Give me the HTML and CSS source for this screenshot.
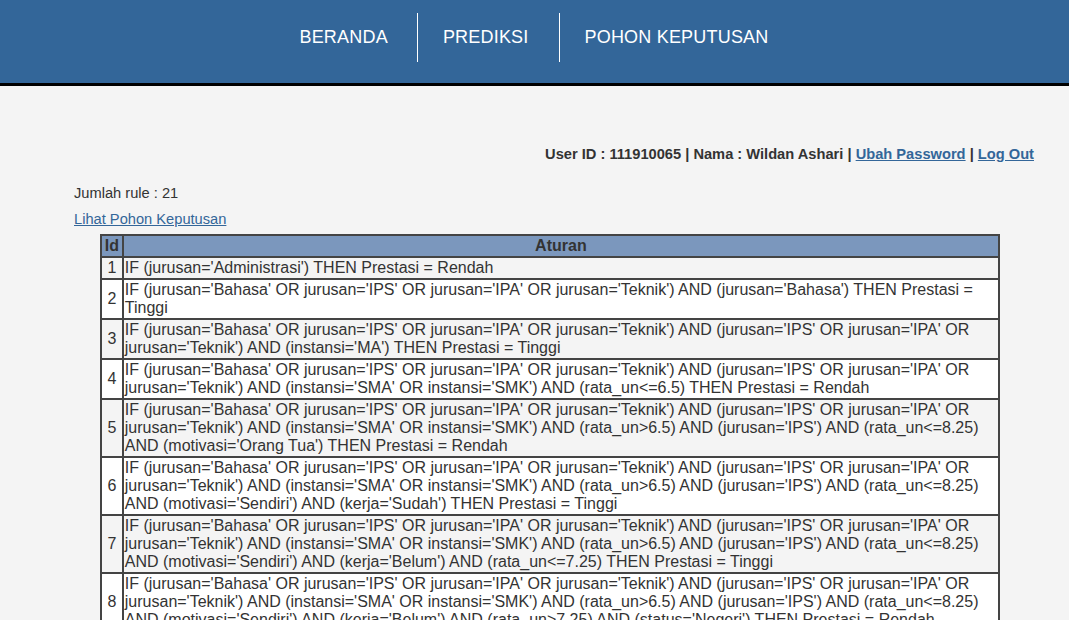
FILE: index.html
```html
<!DOCTYPE html>
<html>
<head>
<meta charset="utf-8">
<title>Pohon Keputusan</title>
<link rel="stylesheet" href="styles.css">
</head>
<body>
<header class="topbar">
  <nav class="nav">
    <a class="nav-item" href="#">BERANDA</a>
    <a class="nav-item" href="#">PREDIKSI</a>
    <a class="nav-item" href="#">POHON KEPUTUSAN</a>
  </nav>
</header>
<main class="content">
  <div class="userinfo">User ID : 111910065 | Nama : Wildan Ashari | <a href="#">Ubah Password</a> | <a href="#">Log Out</a></div>
  <p class="count">Jumlah rule : 21</p>
  <p class="treelink"><a href="#">Lihat Pohon Keputusan</a></p>
  <table class="rules">
    <thead>
      <tr><th class="id">Id</th><th>Aturan</th></tr>
    </thead>
    <tbody>
      <tr><td class="id">1</td><td>IF (jurusan='Administrasi') THEN Prestasi = Rendah</td></tr>
      <tr><td class="id">2</td><td>IF (jurusan='Bahasa' OR jurusan='IPS' OR jurusan='IPA' OR jurusan='Teknik') AND (jurusan='Bahasa') THEN Prestasi = Tinggi</td></tr>
      <tr><td class="id">3</td><td>IF (jurusan='Bahasa' OR jurusan='IPS' OR jurusan='IPA' OR jurusan='Teknik') AND (jurusan='IPS' OR jurusan='IPA' OR jurusan='Teknik') AND (instansi='MA') THEN Prestasi = Tinggi</td></tr>
      <tr><td class="id">4</td><td>IF (jurusan='Bahasa' OR jurusan='IPS' OR jurusan='IPA' OR jurusan='Teknik') AND (jurusan='IPS' OR jurusan='IPA' OR jurusan='Teknik') AND (instansi='SMA' OR instansi='SMK') AND (rata_un&lt;=6.5) THEN Prestasi = Rendah</td></tr>
      <tr><td class="id">5</td><td>IF (jurusan='Bahasa' OR jurusan='IPS' OR jurusan='IPA' OR jurusan='Teknik') AND (jurusan='IPS' OR jurusan='IPA' OR jurusan='Teknik') AND (instansi='SMA' OR instansi='SMK') AND (rata_un&gt;6.5) AND (jurusan='IPS') AND (rata_un&lt;=8.25) AND (motivasi='Orang Tua') THEN Prestasi = Rendah</td></tr>
      <tr><td class="id">6</td><td>IF (jurusan='Bahasa' OR jurusan='IPS' OR jurusan='IPA' OR jurusan='Teknik') AND (jurusan='IPS' OR jurusan='IPA' OR jurusan='Teknik') AND (instansi='SMA' OR instansi='SMK') AND (rata_un&gt;6.5) AND (jurusan='IPS') AND (rata_un&lt;=8.25) AND (motivasi='Sendiri') AND (kerja='Sudah') THEN Prestasi = Tinggi</td></tr>
      <tr><td class="id">7</td><td>IF (jurusan='Bahasa' OR jurusan='IPS' OR jurusan='IPA' OR jurusan='Teknik') AND (jurusan='IPS' OR jurusan='IPA' OR jurusan='Teknik') AND (instansi='SMA' OR instansi='SMK') AND (rata_un&gt;6.5) AND (jurusan='IPS') AND (rata_un&lt;=8.25) AND (motivasi='Sendiri') AND (kerja='Belum') AND (rata_un&lt;=7.25) THEN Prestasi = Tinggi</td></tr>
      <tr><td class="id">8</td><td>IF (jurusan='Bahasa' OR jurusan='IPS' OR jurusan='IPA' OR jurusan='Teknik') AND (jurusan='IPS' OR jurusan='IPA' OR jurusan='Teknik') AND (instansi='SMA' OR instansi='SMK') AND (rata_un&gt;6.5) AND (jurusan='IPS') AND (rata_un&lt;=8.25) AND (motivasi='Sendiri') AND (kerja='Belum') AND (rata_un&gt;7.25) AND (status='Negeri') THEN Prestasi = Rendah</td></tr>
      <tr><td class="id">9</td><td>IF (jurusan='Bahasa' OR jurusan='IPS' OR jurusan='IPA' OR jurusan='Teknik') AND (jurusan='IPS' OR jurusan='IPA' OR jurusan='Teknik') AND (instansi='SMA' OR instansi='SMK') AND (rata_un&gt;6.5) AND (jurusan='IPS') AND (rata_un&lt;=8.25) AND (motivasi='Sendiri') AND (kerja='Belum') AND (rata_un&gt;7.25) AND (status='Swasta') THEN Prestasi = Tinggi</td></tr>
      <tr><td class="id">10</td><td>IF (jurusan='Bahasa' OR jurusan='IPS' OR jurusan='IPA' OR jurusan='Teknik') AND (jurusan='IPS' OR jurusan='IPA' OR jurusan='Teknik') AND (instansi='SMA' OR instansi='SMK') AND (rata_un&gt;6.5) AND (jurusan='IPS') AND (rata_un&gt;8.25) THEN Prestasi = Tinggi</td></tr>
    </tbody>
  </table>
</main>
</body>
</html>
```

FILE: styles.css
```css
html, body {
  margin: 0;
  padding: 0;
}
body {
  background: #f4f4f4;
  font-family: "Liberation Sans", Arial, sans-serif;
  color: #333333;
}
.topbar {
  background: #336699;
  border-bottom: 3px solid #000000;
  display: flex;
  justify-content: center;
  align-items: flex-start;
  padding-top: 13px;
  padding-left: 2px;
  box-sizing: border-box;
  height: 86px;
}
.nav {
  display: flex;
  align-items: stretch;
  height: 49px;
}
.nav-item {
  display: flex;
  align-items: center;
  padding: 0 28px;
  color: #ffffff;
  text-decoration: none;
  font-size: 18px;
  letter-spacing: 0.2px;
}
.nav-item:first-child {
  padding-left: 27px;
  padding-right: 29px;
}
.nav-item + .nav-item {
  border-left: 1px solid #ffffff;
  padding-left: 25px;
  padding-right: 30px;
}
.content {
  padding: 60px 35px 0 74px;
}
.userinfo {
  text-align: right;
  font-size: 11pt;
  font-weight: bold;
  line-height: 17px;
}
a {
  color: #336699;
}
.count {
  margin: 22px 0 0;
  font-size: 11pt;
  line-height: 17px;
}
.treelink {
  margin: 9px 0 0;
  font-size: 11pt;
  line-height: 17px;
}
.rules {
  margin: 6px 0 0 26px;
  width: 900px;
  border: 1px solid #444444;
  border-spacing: 0;
  font-size: 16px;
}
.rules th,
.rules td {
  border: 1px solid #444444;
  padding: 1px;
  text-align: left;
  vertical-align: middle;
}
.rules th {
  background: #7b97bd;
  color: #333333;
  font-weight: bold;
  text-align: center;
}
.rules td.id {
  text-align: center;
  width: 16px;
}
.rules tbody tr:nth-child(odd) {
  background: #f4f4f4;
}
.rules tbody tr:nth-child(even) {
  background: #ffffff;
}
```
